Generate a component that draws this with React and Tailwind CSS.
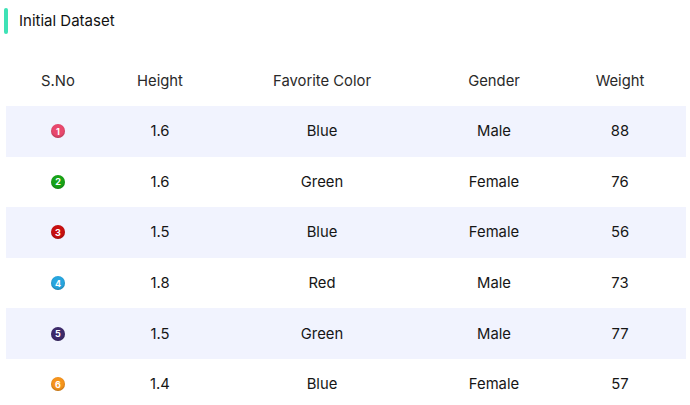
import React from "react";

const rows = [
  { n: 1, c: "bg-[#e9486d]", h: "1.6", col: "Blue", g: "Male", w: "88" },
  { n: 2, c: "bg-[#17a317]", h: "1.6", col: "Green", g: "Female", w: "76" },
  { n: 3, c: "bg-[#c80f10]", h: "1.5", col: "Blue", g: "Female", w: "56" },
  { n: 4, c: "bg-[#27a6df]", h: "1.8", col: "Red", g: "Male", w: "73" },
  { n: 5, c: "bg-[#3d2a6b]", h: "1.5", col: "Green", g: "Male", w: "77" },
  { n: 6, c: "bg-[#f6941c]", h: "1.4", col: "Blue", g: "Female", w: "57" },
];

const grid = "grid grid-cols-[104px_100px_224px_120px_132px] items-center text-center";

export default function App() {
  return (
    <div className="w-[690px] h-[405px] bg-white overflow-hidden text-[#161616]" style={{ fontFamily: "Inter, 'Noto Sans', sans-serif" }}>
      <div className="flex items-center h-[26px] mt-[8px] ml-[4px]">
        <div className="w-[4px] h-[26px] bg-[#3ee2b6] rounded-sm" />
        <div className="ml-[11px] text-[15px] leading-none text-[#111] -mt-[1px]">Initial Dataset</div>
      </div>
      <div className="ml-[6px] mt-[19px] w-[680px]">
        <div className={`${grid} h-[53px] pt-[4px] text-[14.8px] text-[#2a2a2a]`}>
          <div>S.No</div>
          <div>Height</div>
          <div>Favorite Color</div>
          <div>Gender</div>
          <div>Weight</div>
        </div>
        {rows.map((r, i) => (
          <div key={r.n} className={`${grid} h-[50.6px] text-[14.8px] ${i % 2 === 0 ? "bg-[#f1f3fe]" : "bg-white"}`}>
            <div className="flex justify-center">
              <div className={`w-[14px] h-[14px] rounded-full ${r.c} flex items-center justify-center text-white text-[9px] font-bold leading-none shadow-[inset_0_-1px_2px_rgba(0,0,0,0.25)]`}>
                {r.n}
              </div>
            </div>
            <div>{r.h}</div>
            <div>{r.col}</div>
            <div>{r.g}</div>
            <div>{r.w}</div>
          </div>
        ))}
      </div>
    </div>
  );
}
